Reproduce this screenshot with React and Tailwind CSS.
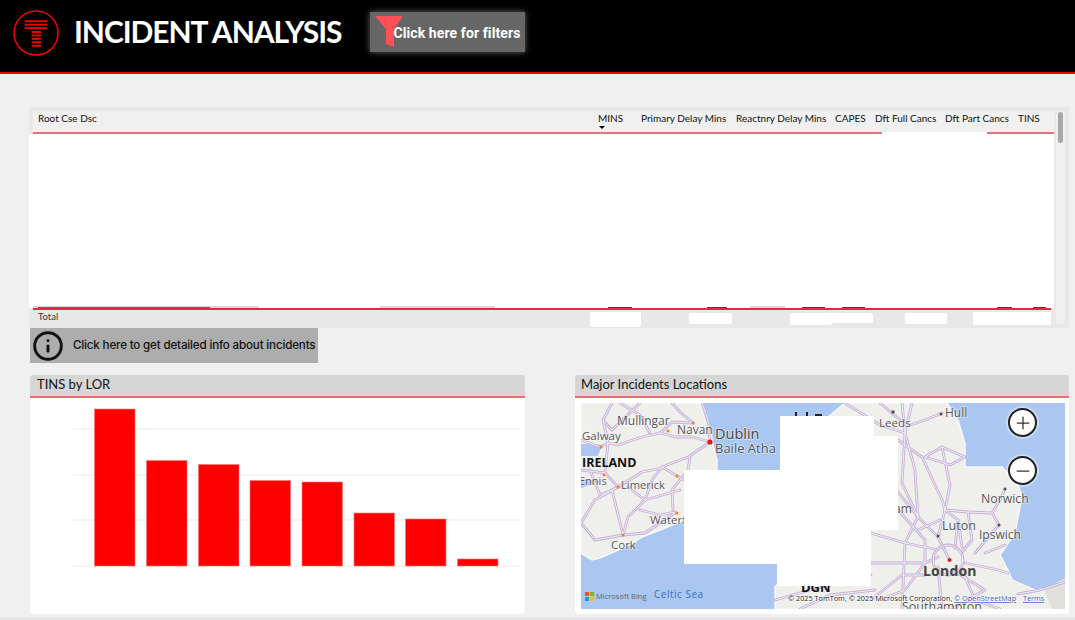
import { Info, Minus, Plus } from "lucide-react";

const columns = [
  "Root Cse Dsc",
  "MINS",
  "Primary Delay Mins",
  "Reactnry Delay Mins",
  "CAPES",
  "Dft Full Cancs",
  "Dft Part Cancs",
  "TINS",
];

const bars = [
  [94.5, 409],
  [146.5, 460.5],
  [198.5, 464.5],
  [250, 480.5],
  [302, 482],
  [354, 513],
  [405.5, 519],
  [457.5, 559],
];

const roads = [
  "M710 442L692 437L675 437L660 433L642 437L618 445L608 443",
  "M710 442L688 457L662 467L652 480L645 500L628 517L623 535",
  "M618 487L642 472L662 468",
  "M690 457L688 470L672 490L673 510",
  "M623 535L612 490L618 487",
  "M623 535L645 533L675 513",
  "M710 442L708 420L702 403",
  "M693 423L680 412L672 403",
  "M581 523L595 500L618 487",
  "M581 523L595 540L623 535",
  "M605 473L608 443L603 420L612 403",
  "M605 473L618 487",
  "M640 510L660 515L675 512",
  "M640 403L612 430L603 420",
  "M628 487L645 500",
  "M620 403L640 415L650 433",
  "M581 440L600 447L608 443",
  "M581 470L605 473",
  "M645 500L680 490",
  "M662 467L684 480",
  "M590 470L600 495L612 490",
  "M660 433L672 422L693 423",
  "M902 403L905 433L902 483L918 517L938 537L948 557",
  "M922 457L942 500L945 510L958 520L962 547",
  "M925 457L942 447L965 457L950 465L925 457",
  "M905 427L925 420L942 413",
  "M845 403L880 425L905 433",
  "M945 510L968 512L992 513L999 525L975 553",
  "M871 533L905 543L938 550",
  "M871 563L925 563L938 557",
  "M905 543L902 609",
  "M938 567L942 609",
  "M965 563L998 570L1008 573",
  "M952 570L985 590L952 609",
  "M898 492L918 517",
  "M898 510L925 540L925 563",
  "M958 520L955 548",
  "M775 600L810 590L871 575",
  "M800 609L830 595L875 590",
  "M1018 594L1040 590L1065 582",
  "M898 440L912 450L922 457",
  "M912 403L905 433L915 470L918 517",
  "M880 403L900 420",
  "M945 510L938 537",
  "M968 512L972 540L962 552",
  "M992 513L1000 500L1005 489",
  "M942 447L950 485L945 510",
  "M918 517L905 543",
  "M925 563L905 590L880 600",
  "M962 570L975 600L1000 609",
  "M985 553L1005 545",
  "M871 600L902 575L925 575",
  "M918 530L940 520",
];

const RoadLayer = () => (
  <g fill="none" strokeLinejoin="round" strokeLinecap="round">
    {roads.map((d) => (
      <path key={`c-${d}`} d={d} stroke="#c6b1d8" strokeWidth="2.8" />
    ))}
    {roads.map((d) => (
      <path key={d} d={d} stroke="#f1edf4" strokeWidth="1" />
    ))}
    <circle cx="948" cy="560" r="15" stroke="#c6b1d8" strokeWidth="2.8" />
    <circle cx="948" cy="560" r="15" stroke="#f1edf4" strokeWidth="1" />
  </g>
);

const mapLabels = [
  ["Mullingar", 617, 425, 12, "#555"],
  ["Navan", 677, 434, 12, "#555"],
  ["Dublin", 715, 439, 14.5, "#444"],
  ["Baile Atha Cliath", 715, 453, 13, "#555"],
  ["Galway", 582, 440, 11.5, "#555"],
  ["Ennis", 579, 485, 11, "#555"],
  ["Limerick", 621, 489, 11.2, "#555"],
  ["Waterford", 650, 524, 11.5, "#555"],
  ["Cork", 611, 549, 11.5, "#555"],
  ["Leeds", 879, 427, 11.6, "#555"],
  ["Hull", 945, 417, 12, "#555"],
  ["Norwich", 981, 503, 12.3, "#555"],
  ["Luton", 942, 530, 12.5, "#555"],
  ["Ipswich", 979, 539, 12, "#555"],
  ["Birmingham", 843, 513, 12, "#555"],
  ["Southampton", 902, 611, 12.5, "#555"],
];

const MapDrawing = () => (
  <svg viewBox="581 403 484 206" className="block h-[206px] w-[484px] font-['Open_Sans',sans-serif]">
    <rect x="581" y="403" width="484" height="206" fill="#a9c7f1" />
    <path
      d="M581 403L700 403L705 420L711 432L713 445L717 460L717 480L700 505L684 520L660 530L642 537L625 547L600 558L592 560L581 553L581 489L606 481L581 478L581 457L598 457L604 444L581 443Z"
      fill="#efefec"
      stroke="#f8f8f6"
      strokeWidth="1.5"
    />
    <path
      d="M845 403L947 403L958 420L965 443L965 467L975 467L1002 467L1018 485L1022 497L1015 533L1000 555L1008 570L1012 580L1035 590L1055 587L1065 580L1065 609L775 609L775 587L800 560L800 440Z"
      fill="#efefec"
      stroke="#f8f8f6"
      strokeWidth="1.5"
    />
    <path d="M1044 590L1065 578L1065 609L1052 609Z" fill="#e2e0dc" />
    <RoadLayer />
    <g fill="#ff7a1a">
      <circle cx="668" cy="431" r="1.5" />
      <circle cx="693" cy="423" r="1.5" />
      <circle cx="601" cy="447" r="1.5" />
      <circle cx="604" cy="475" r="1.5" />
      <circle cx="618" cy="487" r="1.5" />
      <circle cx="677" cy="476" r="1.5" />
      <circle cx="677" cy="513" r="1.5" />
      <circle cx="623" cy="535" r="1.5" />
    </g>
    <g fill="#555">
      <circle cx="893" cy="412" r="1.8" />
      <circle cx="941" cy="414" r="1.5" />
      <circle cx="1005" cy="489" r="1.5" />
      <circle cx="999" cy="525" r="1.5" />
      <circle cx="938" cy="536" r="1.5" />
    </g>
    {mapLabels.map(([label, x, y, size, fill]) => (
      <text key={label} x={x} y={y} fontSize={size} fill={fill} stroke="#ffffff" strokeOpacity="0.5" strokeWidth="1.5" paintOrder="stroke">
        {label}
      </text>
    ))}
    <text x="582" y="467" fontSize="12.5" fontWeight="700" fill="#111">IRELAND</text>
    <text x="654" y="598" fontSize="10" letterSpacing="0.5" fill="#3f6cc4">Celtic Sea</text>
    <text x="923" y="576" fontSize="14" fontWeight="700" fill="#444" letterSpacing="0.2">London</text>
    <text x="801" y="592" fontSize="13" fontWeight="700" fill="#111">DGN</text>
    <path d="M795 412h2v4h-2zM806 412h2v4h-2zM815 414h7v2h-7z" fill="#222" />
    <circle cx="710" cy="442" r="2.6" fill="#e3170f" />
    <circle cx="949.5" cy="560" r="2" fill="#e3170f" />
    <path d="M684 470H780V416H874V436H898V530H871V586H777V564H684Z" fill="#ffffff" />
    <rect x="585" y="592" width="4" height="4" fill="#f25022" />
    <rect x="590" y="592" width="4" height="4" fill="#7fba00" />
    <rect x="585" y="597" width="4" height="4" fill="#00a4ef" />
    <rect x="590" y="597" width="4" height="4" fill="#ffb900" />
    <text x="596" y="599" fontSize="7.5" fill="#666">Microsoft Bing</text>
    <g fontSize="7.3" stroke="#ffffff" strokeOpacity="0.7" strokeWidth="1.5" paintOrder="stroke">
      <text x="788" y="601" fill="#222">© 2025 TomTom, © 2025 Microsoft Corporation,</text>
      <text x="954" y="601" fill="#3b5db5" textDecoration="underline">© OpenStreetMap</text>
      <text x="1023" y="601" fill="#3b5db5" textDecoration="underline">Terms</text>
    </g>
  </svg>
);

const ZoomButton = ({ icon: Icon, className }) => (
  <div className={`absolute left-[427px] flex h-[29px] w-[29px] items-center justify-center rounded-full border-2 border-[#222] bg-white shadow-[0_0_0_2px_rgba(255,255,255,0.35)] ${className}`}>
    <Icon className="h-[20px] w-[20px] text-[#333]" strokeWidth={1.5} />
  </div>
);

const Logo = () => (
  <svg viewBox="0 0 48 48" className="h-[47px] w-[47px] shrink-0">
    <circle cx="23.5" cy="23.5" r="22.5" fill="none" stroke="#f00000" strokeWidth="1.6" />
    <g fill="#f00000">
      <rect x="12" y="10.5" width="23" height="2" />
      <rect x="12" y="14" width="23" height="2" />
      <rect x="12" y="17.5" width="23" height="2" />
      <rect x="19" y="21.5" width="9.5" height="2" />
      <rect x="19" y="25" width="9.5" height="2" />
      <rect x="19" y="28.5" width="9.5" height="2" />
      <rect x="19" y="32" width="9.5" height="2" />
      <rect x="19" y="35.5" width="9.5" height="2" />
    </g>
  </svg>
);

const CardTitle = ({ children }) => (
  <div className="flex h-[23px] items-center rounded-t-[3px] border-b-2 border-[#f26a6a] bg-[#d6d6d6] pb-[1px] text-[13px] text-[#111]">
    {children}
  </div>
);

export default function App() {
  return (
    <div className="h-[620px] w-[1075px] overflow-hidden bg-[#f0f0f0] font-['Lato',sans-serif]">
      <header className="flex h-[74px] items-start border-b-2 border-[#f00000] bg-black">
        <div className="ml-[13px] mt-[10px]">
          <Logo />
        </div>
        <h1 className="ml-[14px] mt-[11px] text-[30px] font-bold leading-[40px] tracking-[-1.05px] text-white">
          INCIDENT ANALYSIS
        </h1>
        <button className="ml-[29px] mt-[12px] flex h-[40px] w-[155px] items-center bg-[#666666] pl-[5px] shadow-[0_0_6px_rgba(255,255,255,0.4)]">
          <svg viewBox="0 0 28 32" className="h-[32px] w-[28px] shrink-0">
            <path d="M0 0H28L19 13V31L11 28V13Z" fill="#ff5055" />
          </svg>
          <span className="-ml-[10px] mt-[1px] whitespace-nowrap font-['Roboto',sans-serif] text-[14px] font-bold leading-[18px] tracking-[0.1px] text-white">
            Click here for filters
          </span>
        </button>
      </header>

      <main className="pl-[29px] pr-[6px] pt-[33px]">
        <section className="flex h-[221px] bg-[#e8e8e8]">
          <div className="w-[1027px] shrink-0">
            <div className="ml-[4px] mr-[2px] pt-[4px]">
              <div className="grid h-[21px] grid-cols-[560px_43px_95px_99px_40px_70px_73px_1fr] bg-[#f0f0f0] pl-[5px] pt-[1px] text-[10px] leading-[13px] text-[#111]">
                {columns.map((c) => (
                  <div key={c} className="flex flex-col whitespace-nowrap">
                    {c}
                    {c === "MINS" && (
                      <span className="ml-px mt-[1px] h-0 w-0 border-x-[3px] border-t-[3px] border-x-transparent border-t-black" />
                    )}
                  </div>
                ))}
              </div>
              <div className="flex h-[2px]">
                <div className="w-[849px] bg-[#e8707f]" />
                <div className="w-[105px] bg-white" />
                <div className="flex-1 bg-[#e8707f]" />
              </div>
            </div>
            <div className="mr-[2px] h-[172px] bg-white" />
            <div className="mr-[2px] flex h-[2px] items-start bg-white">
              <div className="ml-[4px] h-[2px] w-[226px] bg-[#d9d9d9] pl-[5px] pt-px">
                <div className="h-px w-[172px] bg-[#666]" />
              </div>
              <div className="ml-[121px] h-[2px] w-[115px] bg-[#d9d9d9]" />
              <div className="ml-[113px] mt-px h-px w-[24px] bg-[#444]" />
              <div className="ml-[75px] mt-px h-px w-[20px] bg-[#444]" />
              <div className="ml-[23px] h-[2px] w-[35px] bg-[#d9d9d9]" />
              <div className="ml-[17px] mt-px h-px w-[23px] bg-[#444]" />
              <div className="ml-[17px] mt-px h-px w-[23px] bg-[#444]" />
              <div className="ml-[132px] mt-px h-px w-[15px] bg-[#444]" />
              <div className="ml-[21px] mt-px h-px w-[13px] bg-[#444]" />
            </div>
            <div className="ml-[4px] mr-[5px] h-[2px] bg-[#f0263a]" />
            <div className="flex h-[18px] items-start text-[9.5px] leading-[13px] text-[#333]">
              <div className="w-[561px] pl-[9px]">Total</div>
              <div className="mt-[2px] h-[15px] w-[51px] rounded-[2px] bg-white" />
              <div className="ml-[48px] mt-[3px] h-[11px] w-[43px] rounded-[2px] bg-white" />
              <div className="ml-[58px] mt-[3px] h-[12px] w-[42px] rounded-[2px] bg-white" />
              <div className="mt-[3px] h-[10px] w-[41px] rounded-[2px] bg-white" />
              <div className="ml-[32px] mt-[3px] h-[11px] w-[42px] rounded-[2px] bg-white" />
              <div className="ml-[26px] mt-[2px] h-[13px] w-[78px] rounded-[2px] bg-white" />
            </div>
          </div>
          <div className="my-[4px] w-[9px] rounded-[4px] bg-[#f0f0f0] px-[2px] pt-px">
            <div className="h-[31px] w-[5px] rounded-[3px] bg-[#a8a8a8]" />
          </div>
        </section>

        <button className="ml-[1px] flex h-[35px] w-[288px] items-center gap-[9px] bg-[#adadad] pl-[2px] font-['Inter',sans-serif] text-[11.6px] font-medium tracking-[-0.17px] text-[#111]">
          <Info className="h-[32px] w-[32px] text-[#111]" strokeWidth={2.2} />
          <span className="whitespace-nowrap">Click here to get detailed info about incidents</span>
        </button>

        <div className="mt-[12px] flex items-start justify-between pl-[1px]">
          <section className="h-[239px] w-[495px] rounded-[3px] bg-white">
            <CardTitle>
              <span className="pl-[7px]">TINS by LOR</span>
            </CardTitle>
            <svg viewBox="30 398 495 216" className="block h-[216px] w-[495px]">
              {[429, 475, 520, 566].map((y) => (
                <line key={y} x1="73" x2="520" y1={y} y2={y} stroke="#ececec" strokeWidth="1" />
              ))}
              {bars.map(([x, top]) => (
                <rect key={x} x={x} y={top} width="40.5" height={566 - top} fill="#ff0000" stroke="#ff7a7a" strokeWidth="0.6" />
              ))}
            </svg>
          </section>

          <section className="h-[239px] w-[494px] rounded-[3px] bg-white">
            <CardTitle>
              <span className="pl-[6px]">Major Incidents Locations</span>
            </CardTitle>
            <div className="relative ml-[6px] mt-[5px] h-[206px] w-[484px] overflow-hidden">
              <MapDrawing />
              <ZoomButton icon={Plus} className="top-[5px]" />
              <ZoomButton icon={Minus} className="top-[53px]" />
            </div>
          </section>
        </div>
      </main>
      <div className="mt-[3px] h-[3px] bg-[#e6e6e6]" />
    </div>
  );
}
